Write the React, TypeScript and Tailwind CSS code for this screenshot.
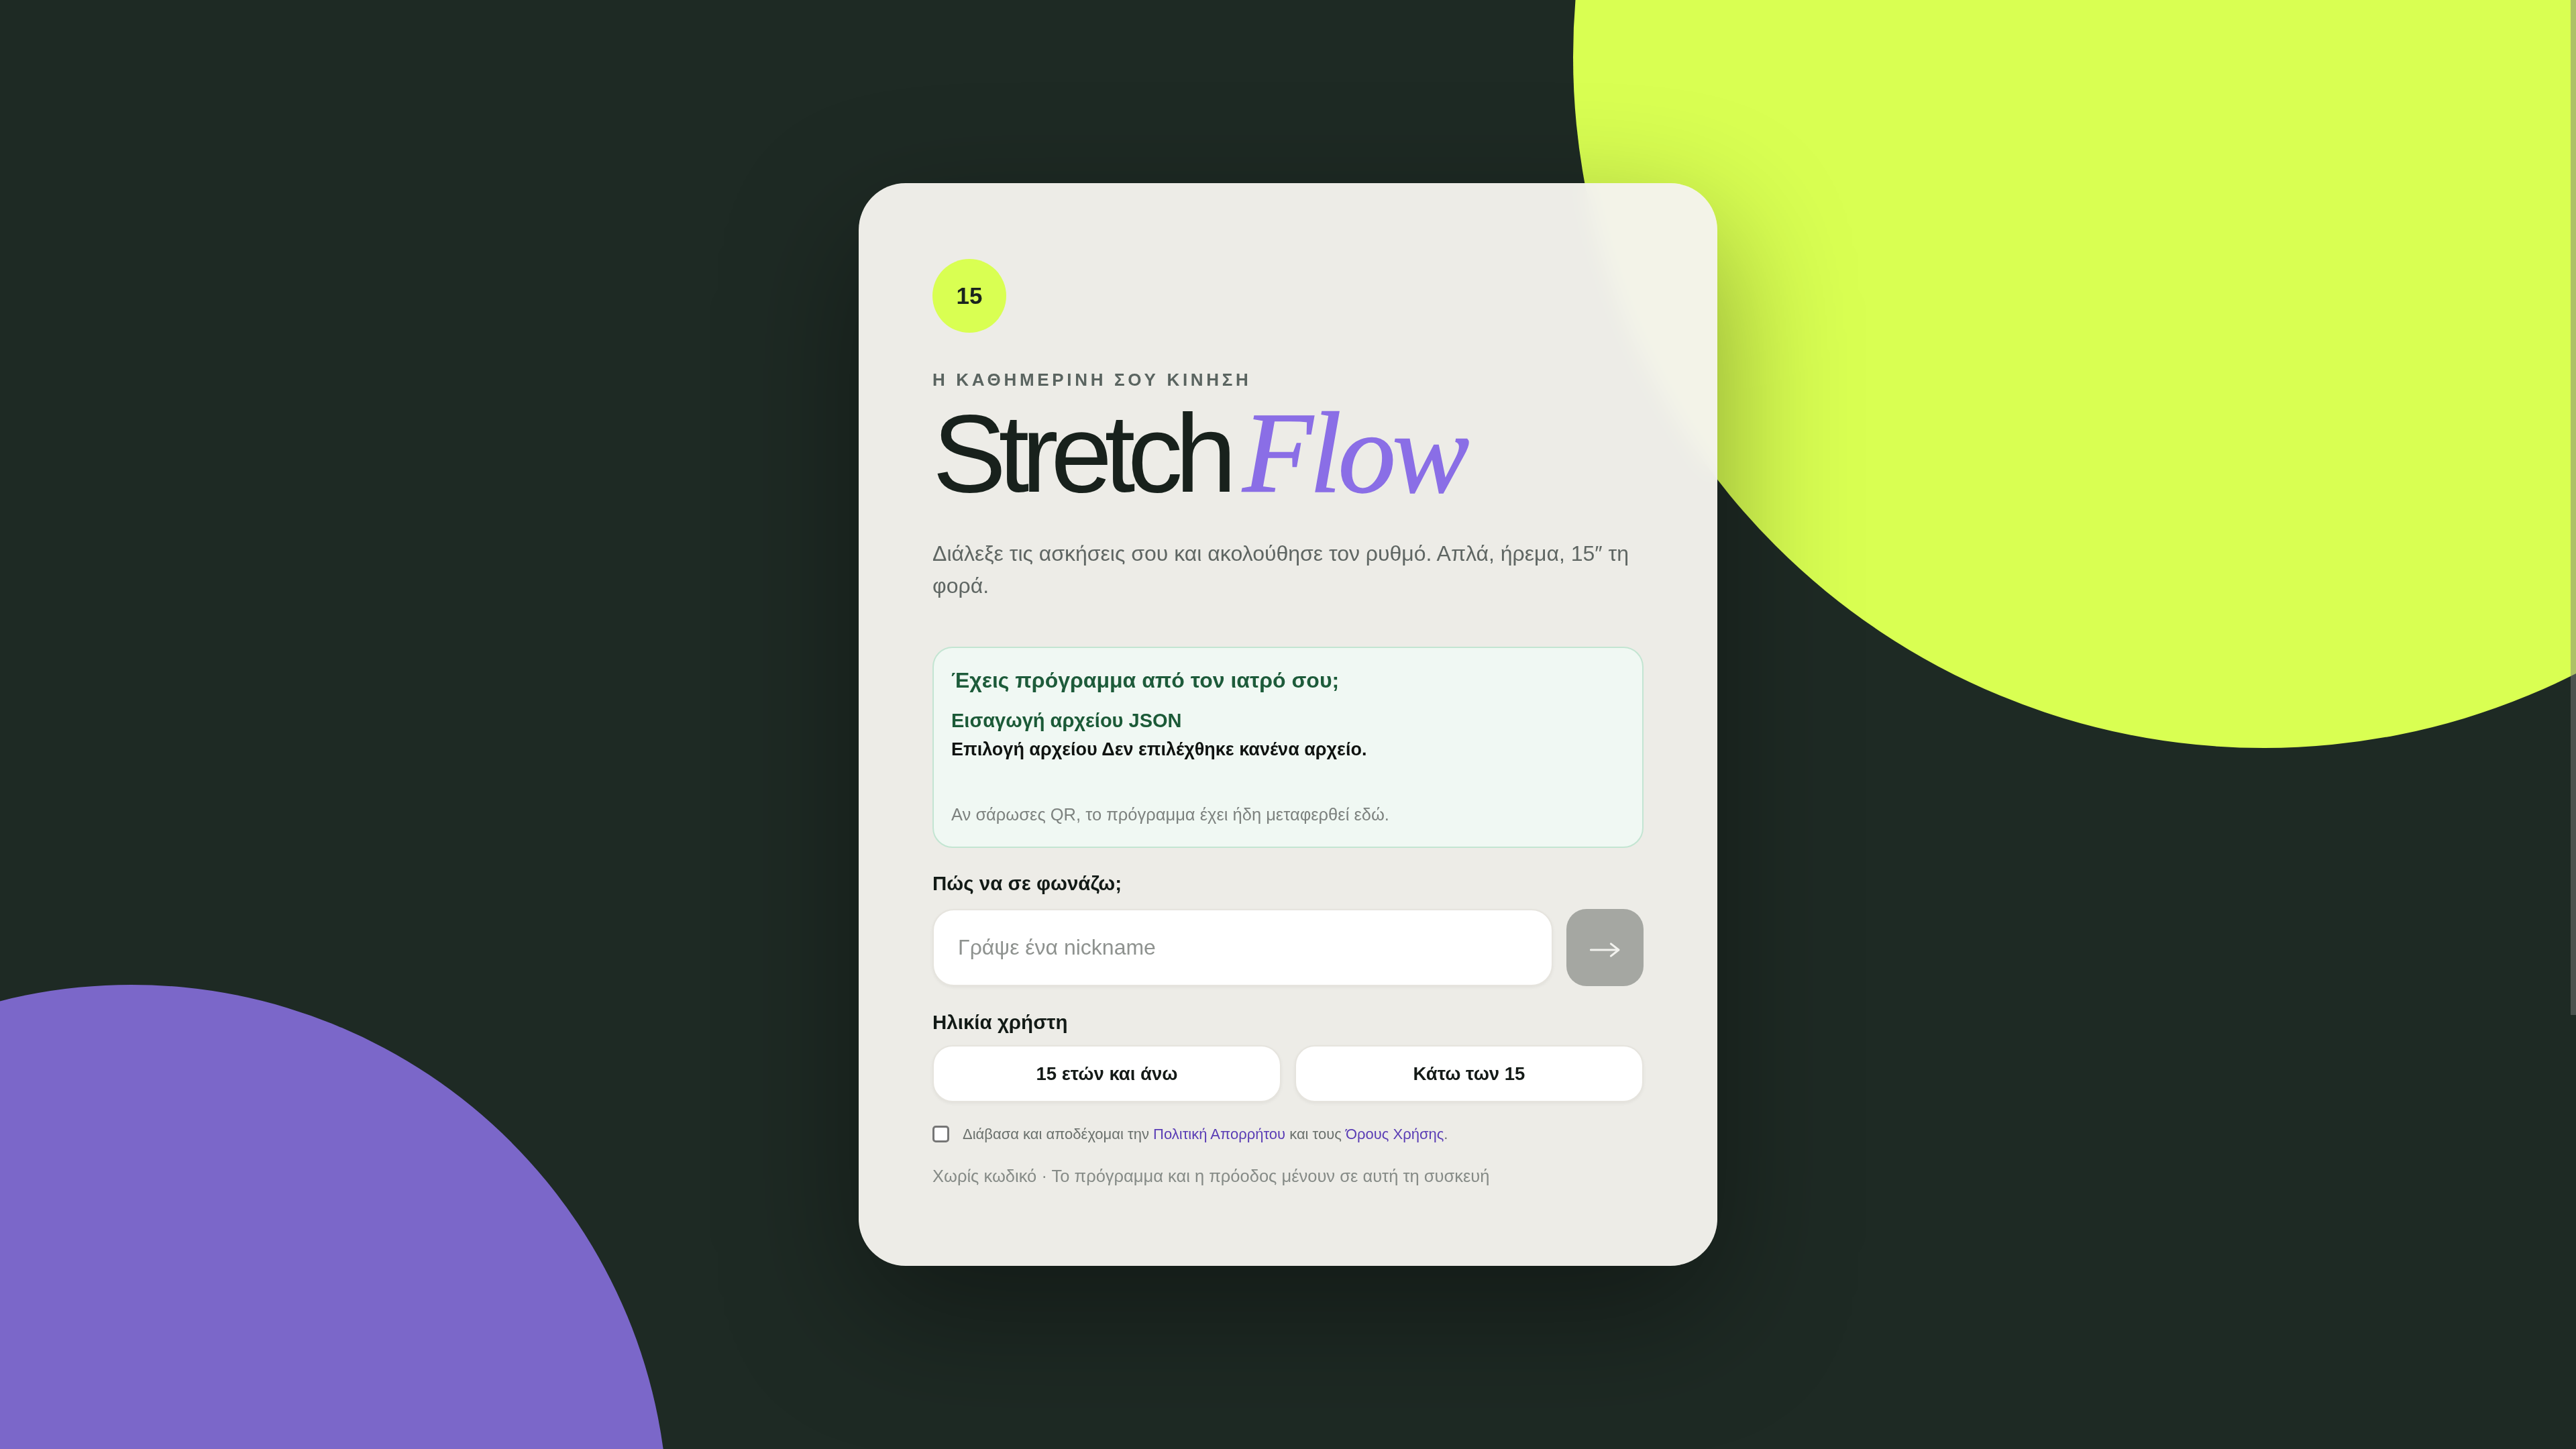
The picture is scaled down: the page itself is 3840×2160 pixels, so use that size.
import { useState } from "react";

function ArrowGlyph() {
  return (
    <svg width="46" height="24" viewBox="0 0 19 10" fill="none" className="mt-[7px]">
      <path d="M0.5 5H17.6" stroke="currentColor" strokeWidth="1.3" strokeLinecap="round" />
      <path d="M13 1.2L17.8 5L13 8.8" stroke="currentColor" strokeWidth="1.3" strokeLinecap="round" strokeLinejoin="round" />
    </svg>
  );
}

export default function App() {
  const [nickname, setNickname] = useState("");
  const [accepted, setAccepted] = useState(false);

  return (
    <div className="relative h-screen overflow-hidden bg-[#1e2a24] font-['Liberation_Sans',Arial,sans-serif]">
      <div className="absolute left-[2345px] top-[-945px] h-[2060px] w-[2060px] rounded-full bg-[#d9ff52]" />
      <div className="absolute left-[-604px] top-[1468px] h-[1600px] w-[1600px] rounded-full bg-[#7b67c9]" />

      {/* page scroll thumb */}
      <div className="absolute right-0 top-0 h-[1513px] w-[8px] bg-[#808080]/[0.48]" />

      <main className="relative flex h-full items-center justify-center">
        <section className="w-[1280px] rounded-[70px] bg-[#f4f3ed]/[0.97] px-[110px] pb-[114px] pt-[113px] shadow-[0_70px_200px_rgba(0,0,0,0.38)] backdrop-blur-[16px]">
          <div className="flex h-[110px] w-[110px] items-center justify-center rounded-full bg-[#d9ff52] text-[35px] font-bold text-[#1a231e]">
            15
          </div>

          <p className="mt-[53px] text-[26px] font-bold leading-[35px] tracking-[0.18em] text-[#5a6460]">
            Η ΚΑΘΗΜΕΡΙΝΗ ΣΟΥ ΚΙΝΗΣΗ
          </p>

          <h1 className="mt-[5px] text-[165px] font-normal leading-none tracking-[-0.07em] text-[#18211c]">
            Stretch{" "}
            <span className="-ml-[14px] font-['Liberation_Serif',serif] text-[172px] italic tracking-[-0.03em] text-[#8a6ee6] [-webkit-text-stroke:1.5px_#8a6ee6]">
              Flow
            </span>
          </h1>

          <p className="mt-[41px] text-[32px] leading-[47.5px] text-[#5f6663]">
            Διάλεξε τις ασκήσεις σου και ακολούθησε τον ρυθμό. Απλά, ήρεμα, 15″ τη φορά.
          </p>

          <div className="mt-[67px] rounded-[30px] border-2 border-[#c3e5d2] bg-[#f0f8f3] px-[26px] pb-[30px] pt-[28px]">
            <p className="text-[32px] font-bold leading-[40px] text-[#1d5b3a]">
              Έχεις πρόγραμμα από τον ιατρό σου;
            </p>
            <p className="mt-[20px] text-[29px] font-bold leading-[40px] text-[#1b5a37]">Εισαγωγή αρχείου JSON</p>
            <p className="mt-[3px] text-[27px] font-bold leading-[40px] text-[#0f1310]">
              Επιλογή αρχείου Δεν επιλέχθηκε κανένα αρχείο.
            </p>
            <p className="mt-[60px] text-[25.5px] leading-[35px] text-[#7d827f]">
              Αν σάρωσες QR, το πρόγραμμα έχει ήδη μεταφερθεί εδώ.
            </p>
          </div>

          <label className="mt-[33px] block text-[29.5px] font-bold leading-[40px] text-[#121a16]">
            Πώς να σε φωνάζω;
          </label>
          <div className="mt-[18px] flex gap-[20px]">
            <input
              value={nickname}
              onChange={(e) => setNickname(e.target.value)}
              placeholder="Γράψε ένα nickname"
              className="h-[115px] min-w-0 flex-1 rounded-[32px] border-2 border-[#e6e4de] bg-white px-[36px] text-[32px] text-[#1a211d] shadow-[0_2px_5px_rgba(0,0,0,0.05)] outline-none placeholder:text-[#8e928f]"
            />
            <button className="flex h-[115px] w-[115px] items-center justify-center rounded-[30px] bg-[#a5a7a2] text-[#f2f2ee]">
              <ArrowGlyph />
            </button>
          </div>

          <p className="mt-[34px] text-[29.5px] font-bold leading-[40px] text-[#121a16]">Ηλικία χρήστη</p>
          <div className="mt-[14px] grid grid-cols-2 gap-[20px]">
            <button className="h-[85px] rounded-[30px] border-2 border-[#e6e4de] bg-white text-[27.5px] font-bold text-[#141a17] shadow-[0_2px_5px_rgba(0,0,0,0.05)]">
              15 ετών και άνω
            </button>
            <button className="h-[85px] rounded-[30px] border-2 border-[#e6e4de] bg-white text-[27.5px] font-bold text-[#141a17] shadow-[0_2px_5px_rgba(0,0,0,0.05)]">
              Κάτω των 15
            </button>
          </div>

          <label className="mt-[30px] flex items-center gap-[20px] text-[22px] leading-[35px] text-[#6b716d]">
            <input
              type="checkbox"
              checked={accepted}
              onChange={(e) => setAccepted(e.target.checked)}
              className="h-[25px] w-[25px] shrink-0 appearance-none rounded-[5px] border-[3px] border-[#767676] bg-white"
            />
            <span>
              Διάβασα και αποδέχομαι την <a className="text-[#5a3db5]">Πολιτική Απορρήτου</a> και τους{" "}
              <a className="text-[#5a3db5]">Όρους Χρήσης</a>.
            </span>
          </label>

          <p className="mt-[27px] text-[25.5px] leading-[37.5px] text-[#868b87]">
            Χωρίς κωδικό · Το πρόγραμμα και η πρόοδος μένουν σε αυτή τη συσκευή
          </p>
        </section>
      </main>
    </div>
  );
}
